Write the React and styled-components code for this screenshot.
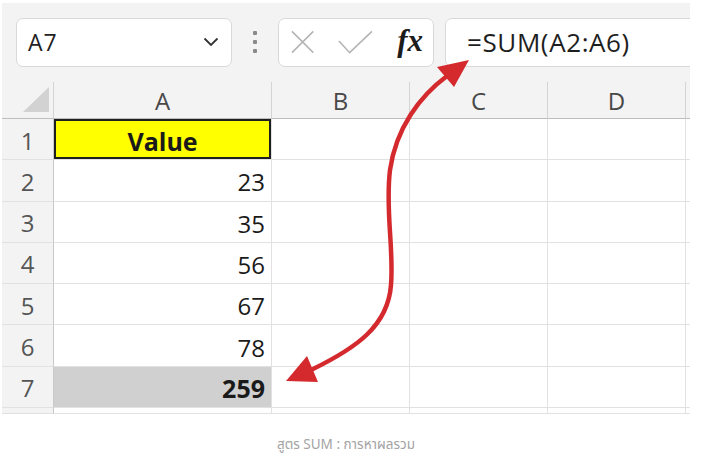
import React from "react";
import styled, { createGlobalStyle } from "styled-components";

const GlobalStyle = createGlobalStyle`
  html, body { margin: 0; padding: 0; background: #fff; }
  body { font-family: "Open Sans", "Noto Sans", sans-serif; }
`;

const Page = styled.div`
  position: relative;
  width: 712px;
  height: 454px;
  padding: 3px 0 0 2px;
  box-sizing: border-box;
`;

const Sheet = styled.div`
  width: 688px;
  height: 411px;
  overflow: hidden;
  background: #f3f3f3;
  display: flex;
  flex-direction: column;
`;

const FormulaBar = styled.div`
  display: flex;
  align-items: center;
  height: 80px;
  padding: 0 0 0 14px;
  box-sizing: border-box;
`;

const Box = styled.div`
  background: #fff;
  border: 1px solid #d9d9d9;
  border-radius: 7px;
  height: 49px;
  box-sizing: border-box;
  display: flex;
  align-items: center;
`;

const NameBox = styled(Box)`
  width: 216px;
  padding: 0 12px 0 11px;
  justify-content: space-between;
  font-size: 23px;
  letter-spacing: 1px;
  color: #222;
`;

const Grip = styled.div`
  width: 46px;
  display: flex;
  flex-direction: column;
  align-items: center;
  gap: 5px;
  span {
    width: 4px;
    height: 4px;
    background: #8a8a8a;
    border-radius: 1px;
  }
`;

const FxBox = styled(Box)`
  width: 156px;
  padding: 0 10px 0 12px;
  gap: 24px;
`;

const Fx = styled.span`
  font-family: "Liberation Serif", "DejaVu Serif", serif;
  font-style: italic;
  font-weight: 700;
  font-size: 31px;
  color: #1c1c1c;
  margin-left: auto;
  line-height: 1;
  padding-bottom: 4px;
`;

const Formula = styled(Box)`
  flex: 1;
  margin-left: 11px;
  margin-right: -12px;
  padding-left: 21px;
  font-size: 26px;
  letter-spacing: 0.6px;
  color: #1e1e1e;
`;

const Grid = styled.div`
  display: grid;
  grid-template-columns: 52px 218px 138px 138px 138px 20px;
  grid-template-rows: 37px repeat(7, 41.3px) 6px;
`;

const Corner = styled.div`
  position: relative;
  border-right: 1px solid #d4d4d4;
  border-bottom: 1px solid #bdbdbd;
  &::after {
    content: "";
    position: absolute;
    right: 4px;
    bottom: 6px;
    width: 0;
    height: 0;
    border-left: 26px solid transparent;
    border-bottom: 25px solid #d2d2d2;
  }
`;

const ColHead = styled.div`
  display: flex;
  align-items: center;
  justify-content: center;
  font-size: 24px;
  color: #484848;
  border-right: 1px solid #d4d4d4;
  border-bottom: 1px solid #bdbdbd;
  padding-top: 2px;
`;

const RowHead = styled.div`
  display: flex;
  align-items: center;
  justify-content: center;
  font-size: 24px;
  color: #555;
  border-right: 1px solid #c9c9c9;
  border-bottom: 1px solid #e1e1e1;
  padding-top: 2px;
`;

const Cell = styled.div`
  display: flex;
  align-items: center;
  justify-content: ${(p) => (p.$center ? "center" : "flex-end")};
  padding: 3px 6px 0 0;
  box-sizing: border-box;
  font-size: ${(p) => (p.$bold ? "25px" : "24px")};
  font-weight: ${(p) => (p.$bold ? 700 : 400)};
  color: #1a1a1a;
  background: ${(p) => p.$bg || "#fff"};
  border-right: 1px solid #e1e1e1;
  border-bottom: 1px solid #e1e1e1;
  ${(p) => p.$outlined && "box-shadow: inset 0 0 0 2px #1f1f1f; padding-right: 0;"}
`;

const Caption = styled.div`
  width: 688px;
  text-align: center;
  margin-top: 21px;
  font-family: "Noto Sans", "Noto Sans Thai", "DejaVu Sans", sans-serif;
  font-size: 13.5px;
  color: #a3a3a3;
`;

const Overlay = styled.svg`
  position: absolute;
  top: 0;
  left: 0;
  pointer-events: none;
`;

const Chevron = () => (
  <svg width="16" height="10" viewBox="0 0 16 10">
    <path d="M1.5 1.5 L8 8 L14.5 1.5" fill="none" stroke="#333" strokeWidth="1.8" />
  </svg>
);

const Cross = () => (
  <svg width="24" height="24" viewBox="0 0 24 24">
    <path d="M1 1 L23 23 M23 1 L1 23" stroke="#b4b4b4" strokeWidth="1.6" />
  </svg>
);

const Check = () => (
  <svg width="36" height="24" viewBox="0 0 36 24">
    <path d="M1 11 L12 23 L35 1" fill="none" stroke="#b4b4b4" strokeWidth="1.6" />
  </svg>
);

const values = [23, 35, 56, 67, 78];
const cols = ["A", "B", "C", "D", ""];

export default function App() {
  const rows = [];
  rows.push(
    <React.Fragment key="r1">
      <RowHead>1</RowHead>
      <Cell $center $bold $bg="#ffff00" $outlined>Value</Cell>
      <Cell /><Cell /><Cell /><Cell />
    </React.Fragment>
  );
  values.forEach((v, i) => {
    rows.push(
      <React.Fragment key={"r" + (i + 2)}>
        <RowHead>{i + 2}</RowHead>
        <Cell>{v}</Cell>
        <Cell /><Cell /><Cell /><Cell />
      </React.Fragment>
    );
  });
  rows.push(
    <React.Fragment key="r7">
      <RowHead>7</RowHead>
      <Cell $bold $bg="#d0d0d0">259</Cell>
      <Cell /><Cell /><Cell /><Cell />
    </React.Fragment>
  );

  return (
    <Page>
      <GlobalStyle />
      <Sheet>
        <FormulaBar>
          <NameBox>
            <span>A7</span>
            <Chevron />
          </NameBox>
          <Grip><span /><span /><span /></Grip>
          <FxBox>
            <Cross />
            <Check />
            <Fx>fx</Fx>
          </FxBox>
          <Formula>=SUM(A2:A6)</Formula>
        </FormulaBar>
        <Grid>
          <Corner />
          {cols.map((c, i) => (
            <ColHead key={i}>{c}</ColHead>
          ))}
          {rows}
          <RowHead />
          <Cell /><Cell /><Cell /><Cell /><Cell />
        </Grid>
      </Sheet>
      <Caption>สูตร SUM : การหาผลรวม</Caption>
      <Overlay width="712" height="454" viewBox="0 0 712 454">
        <path
          d="M447 76 C420 96 396 128 390 170 C385 210 394 248 391 285 C388 326 356 348 313 369"
          fill="none"
          stroke="#d42a2e"
          strokeWidth="4.5"
          strokeLinecap="round"
        />
        <polygon points="469,60 437,67 454,87" fill="#d42a2e" />
        <polygon points="286,381 307,356 318,382" fill="#d42a2e" />
      </Overlay>
    </Page>
  );
}
